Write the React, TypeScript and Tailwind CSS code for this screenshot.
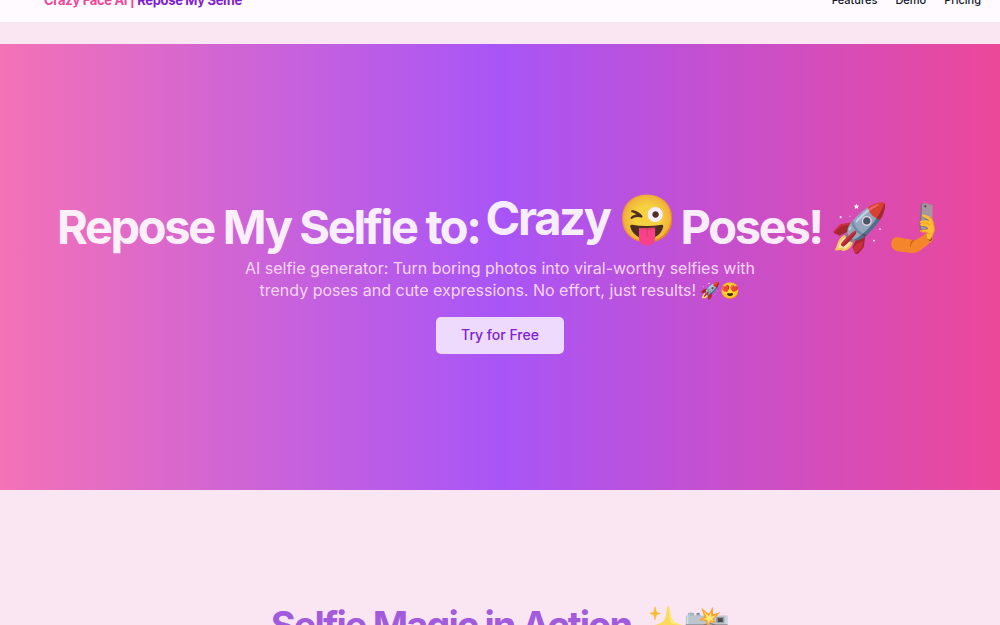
import React from 'react';

const navLinks = [
  { label: 'Features', href: '#features' },
  { label: 'Demo', href: '#demo' },
  { label: 'Pricing', href: '#pricing' },
];

const Header: React.FC = () => (
  <header className="-mt-[22px] h-11 bg-[#fffaff] flex items-center justify-between pl-11 pr-[19px] pb-px">
    <a href="#top" className="text-[13px] leading-5 font-bold tracking-tight text-[#7e22ce]">
      <span className="text-[#ec4899]">Crazy Face AI |</span> Repose My Selfie
    </a>
    <nav className="flex items-center gap-[18px]">
      {navLinks.map(link => (
        <a key={link.href} href={link.href} className="text-[11px] leading-4 font-medium text-slate-900">
          {link.label}
        </a>
      ))}
    </nav>
  </header>
);

const Hero: React.FC = () => (
  <section
    id="top"
    className="mt-[22px] pt-[156px] pb-[136px] bg-linear-to-r/srgb from-[#f472b6] via-[#a855f7] to-[#ec4899] flex flex-col items-center text-center"
  >
    <h1 className="flex flex-wrap justify-center gap-x-1.5 text-[47px] leading-[54px] font-bold tracking-tighter text-white opacity-90">
      <span>Repose My Selfie to:</span>
      <span className="-translate-y-[9px]">Crazy 😜</span>
      <span>Poses! 🚀🤳</span>
    </h1>
    <p className="max-w-[520px] mt-[3px] text-base leading-[22px] text-[#f5d5f5]">
      AI selfie generator: Turn boring photos into viral-worthy selfies with trendy poses and cute expressions. No effort, just results! 🚀😍
    </p>
    <button className="mt-4 h-[37px] px-[25px] pb-[2px] rounded-[5px] bg-[#eddafc] text-[14px] leading-5 font-medium text-[#7e22ce]">
      Try for Free
    </button>
  </section>
);

const Demo: React.FC = () => (
  <section id="demo" className="pt-[111px] pb-20 text-center">
    <h2 className="text-[38px] leading-[48px] font-bold tracking-tighter text-[#a25bdc]">
      Selfie Magic in Action <span className="opacity-80">✨📸</span>
    </h2>
  </section>
);

export default function App() {
  return (
    <div className="h-screen overflow-hidden bg-[#fae6f3] font-['Inter','Noto_Color_Emoji',sans-serif]">
      <Header />
      <main>
        <Hero />
        <Demo />
      </main>
    </div>
  );
}
